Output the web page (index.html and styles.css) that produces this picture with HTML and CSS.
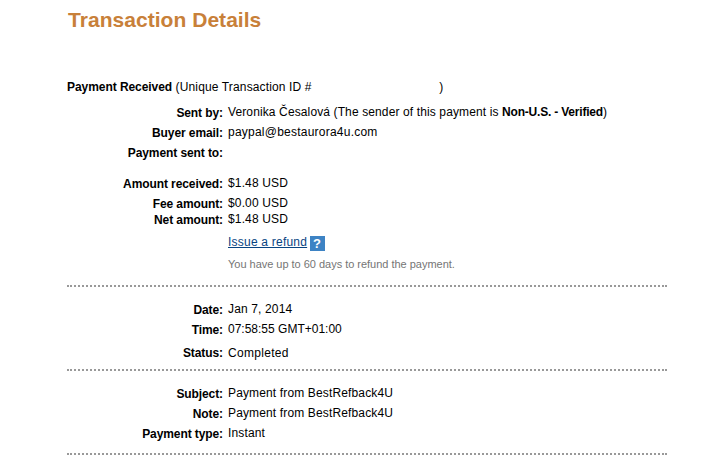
FILE: index.html
```html
<!DOCTYPE html>
<html>
<head>
    <title>Transaction Details</title>
    <meta charset="utf-8">
    <link rel="stylesheet" href="styles.css">
</head>
<body>
    <div class="content">
        <h1>Transaction Details</h1>

        <p class="payment-title"><strong>Payment Received</strong> (Unique Transaction ID # <span class="transaction-id"></span>)</p>

        <dl class="details sender">
            <dt>Sent by:</dt>
            <dd class="sender-name">Veronika Česalová (The sender of this payment is <strong>Non-U.S. - Verified</strong>)</dd>
            <dt>Buyer email:</dt>
            <dd class="email">paypal@bestaurora4u.com</dd>
            <dt>Payment sent to:</dt>
            <dd></dd>
        </dl>

        <dl class="details amounts">
            <dt>Amount received:</dt>
            <dd>$1.48 USD</dd>
            <dt>Fee amount:</dt>
            <dd>$0.00 USD</dd>
            <dt>Net amount:</dt>
            <dd>$1.48 USD</dd>
        </dl>

        <div class="refund">
            <a href="#">Issue a refund</a>
            <span class="help">?</span>
            <p class="hint">You have up to 60 days to refund the payment.</p>
        </div>

        <dl class="details dates">
            <dt>Date:</dt>
            <dd>Jan 7, 2014</dd>
            <dt>Time:</dt>
            <dd class="time">07:58:55 GMT+01:00</dd>
            <dt class="status-label">Status:</dt>
            <dd class="status">Completed</dd>
        </dl>

        <dl class="details info">
            <dt>Subject:</dt>
            <dd>Payment from BestRefback4U</dd>
            <dt>Note:</dt>
            <dd>Payment from BestRefback4U</dd>
            <dt>Payment type:</dt>
            <dd>Instant</dd>
        </dl>
    </div>
</body>
</html>
```

FILE: styles.css
```css
body {
    margin: 0;
    background: #fff;
    color: #000;
    font-family: "Liberation Sans", Arial, sans-serif;
    font-size: 12px;
    letter-spacing: 0.14px;
    line-height: 16px;
}

.content {
    width: 600px;
    margin-left: 67px;
    padding-top: 8px;
}

h1 {
    margin: 0 0 47px;
    padding-left: 1px;
    color: #c88039;
    font-size: 21px;
    letter-spacing: 0.04px;
    line-height: 24px;
}

p,
dl,
dd {
    margin: 0;
}

strong {
    letter-spacing: -0.2px;
}

.payment-title {
    margin-bottom: 9px;
    white-space: nowrap;
}

.payment-title strong {
    letter-spacing: -0.06px;
}

.transaction-id {
    display: inline-block;
    width: 124px;
}

.details {
    display: grid;
    grid-template-columns: 156px 1fr;
    column-gap: 5px;
    white-space: nowrap;
}

.details dt {
    padding-top: 1px;
    font-weight: bold;
    letter-spacing: -0.09px;
    text-align: right;
}

.details .status-label {
    padding-top: 0;
}

.sender {
    grid-template-rows: 20px 20px 16px;
    margin-bottom: 15px;
}

.sender-name {
    letter-spacing: 0.12px;
}

.email {
    letter-spacing: 0.23px;
}

.amounts {
    grid-template-rows: 20px 16px 16px;
    margin-bottom: 7px;
}

.refund {
    height: 51px;
    padding-left: 161px;
    border-bottom: 2px dotted #999;
}

.refund a {
    color: #084482;
    letter-spacing: 0.22px;
}

.help {
    display: inline-block;
    width: 15px;
    height: 15px;
    margin-left: -1px;
    background: #3d83c4;
    color: #fff;
    font-size: 13px;
    font-weight: bold;
    line-height: 15px;
    text-align: center;
    vertical-align: -2px;
}

.hint {
    margin-top: 5px;
    color: #757575;
    font-size: 11px;
    letter-spacing: -0.02px;
}

.dates {
    grid-template-rows: 20px 24px 16px;
    padding: 14px 0 8px;
    border-bottom: 2px dotted #999;
}

.time {
    letter-spacing: 0;
}

.status {
    letter-spacing: 0.3px;
}

.info {
    grid-template-rows: 20px 20px 16px;
    padding: 14px 0 12px;
    border-bottom: 2px dotted #999;
}
```
